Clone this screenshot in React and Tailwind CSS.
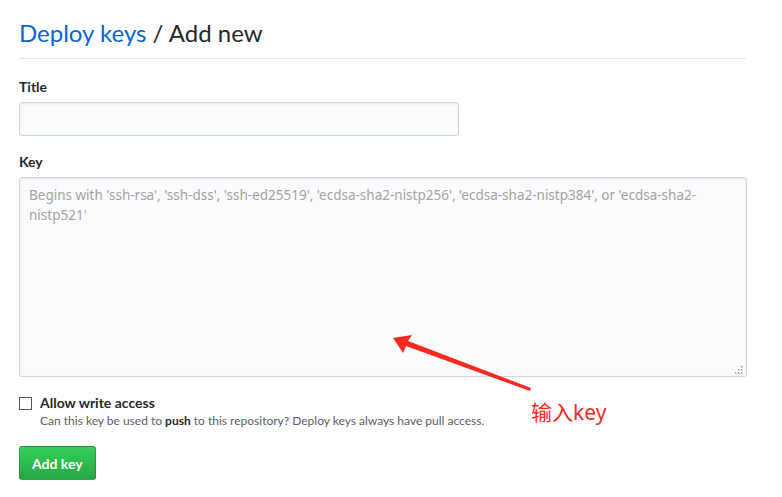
import React from 'react';

const font = { fontFamily: 'Lato, "Noto Sans", Arial, sans-serif' };

function Arrow() {
  return (
    <svg className="absolute left-0 top-0 pointer-events-none" width="782" height="497">
      <polygon points="393,338 403,353 406,346 530,391 531,388 408,341 412,335" fill="#f5291f" />
    </svg>
  );
}

export default function App() {
  return (
    <div className="relative w-[782px] h-[497px] bg-white text-[#24292e] overflow-hidden" style={font}>
      <div className="pl-[19px] pr-[36px] pt-[16px]">
        {/* Header */}
        <div className="border-b border-[#e1e4e8] pb-[8px]">
          <h1 className="text-[24px] leading-[34px] font-normal">
            <span className="text-[#0366d6]">Deploy keys</span> / Add new
          </h1>
        </div>

        {/* Title */}
        <div className="mt-[18px]">
          <label className="block text-[14px] leading-[20px] font-bold">Title</label>
          <input
            className="mt-[5px] block w-[440px] h-[34px] rounded-[3px] border border-[#d1d5da] bg-[#fafbfc] shadow-[inset_0_1px_2px_rgba(27,31,35,0.075)] px-2 text-[14px] outline-none"
          />
        </div>

        {/* Key */}
        <div className="mt-[16px]">
          <label className="block text-[14px] leading-[20px] font-bold">Key</label>
          <div className="relative mt-[5px]">
            <textarea
              className="block w-[728px] h-[200px] resize-none rounded-[3px] border border-[#d1d5da] bg-[#fafbfc] shadow-[inset_0_1px_2px_rgba(27,31,35,0.075)] px-[9px] py-[7px] font-['Noto_Sans'] text-[13.5px] leading-[20px] outline-none placeholder:text-[#a3a3a3]"
              placeholder="Begins with 'ssh-rsa', 'ssh-dss', 'ssh-ed25519', 'ecdsa-sha2-nistp256', 'ecdsa-sha2-nistp384', or 'ecdsa-sha2-nistp521'"
            />
            <svg className="absolute right-[3px] bottom-[3px]" width="8" height="8">
              <rect x="6" y="0" width="1.5" height="1.5" fill="#9a9a9a" />
              <rect x="3" y="3" width="1.5" height="1.5" fill="#9a9a9a" />
              <rect x="6" y="3" width="1.5" height="1.5" fill="#9a9a9a" />
              <rect x="0" y="6" width="1.5" height="1.5" fill="#9a9a9a" />
              <rect x="3" y="6" width="1.5" height="1.5" fill="#9a9a9a" />
              <rect x="6" y="6" width="1.5" height="1.5" fill="#9a9a9a" />
            </svg>
          </div>
        </div>

        {/* Checkbox */}
        <div className="mt-[17px] flex items-start gap-[8px]">
          <span className="mt-[3px] block w-[13px] h-[13px] border border-[#555] bg-white" />
          <div>
            <div className="text-[14px] leading-[18px] font-bold">Allow write access</div>
            <div className="text-[12px] leading-[18px] text-[#586069]">
              Can this key be used to <b className="font-bold text-[#24292e]">push</b> to this repository? Deploy keys always have pull access.
            </div>
          </div>
        </div>

        {/* Button */}
        <button className="mt-[16px] h-[34px] px-[12px] rounded-[3px] border border-[rgba(27,31,35,0.2)] bg-gradient-to-b from-[#34d058] to-[#28a745] text-white text-[14px] font-bold">
          Add key
        </button>
      </div>

      <Arrow />
      <div
        className="absolute left-[531px] top-[398px] text-[21px] leading-[28px] text-[#f5291f]"
        style={{ fontFamily: '"Noto Sans", "Noto Sans CJK SC", sans-serif' }}
      >
        输入key
      </div>
    </div>
  );
}
